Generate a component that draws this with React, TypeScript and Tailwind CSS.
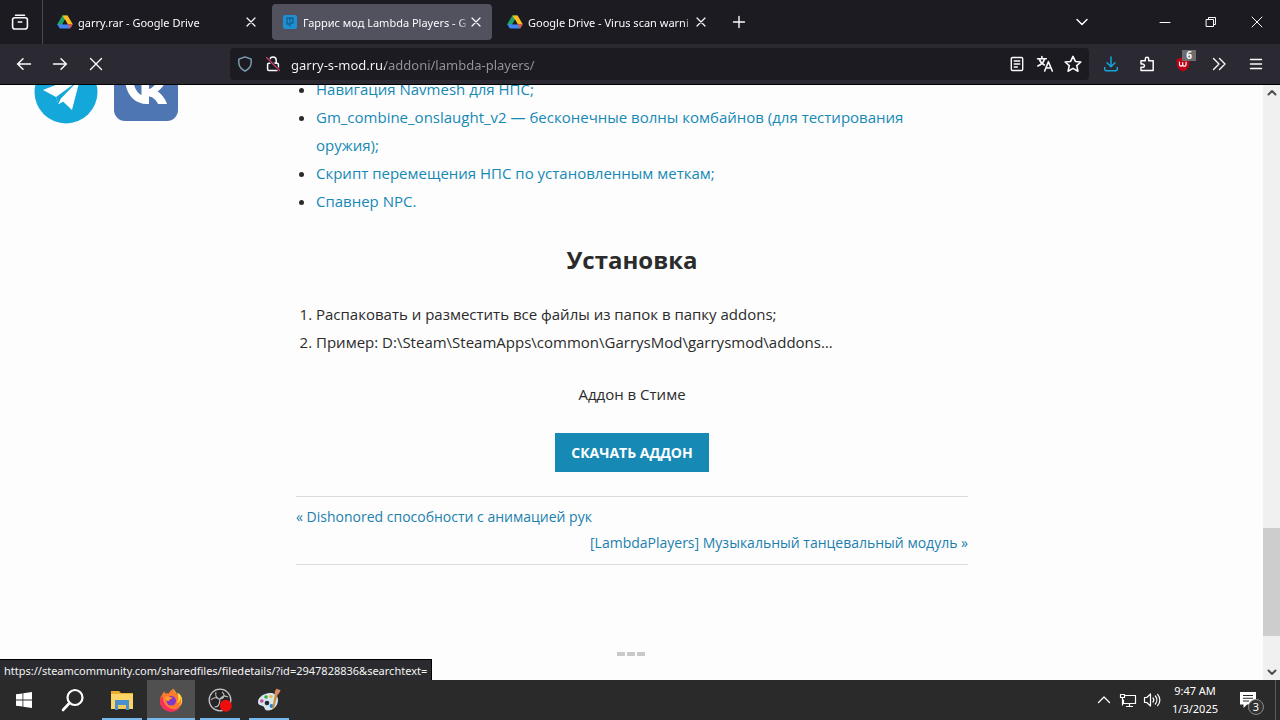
import React from "react";

type IconProps = { children: React.ReactNode; className?: string; box?: string };

function Icon({ children, className = "size-4", box = "0 0 16 16" }: IconProps) {
  return (
    <svg
      viewBox={box}
      className={`shrink-0 ${className}`}
      fill="none"
      stroke="currentColor"
      strokeWidth="1.4"
      strokeLinecap="round"
      strokeLinejoin="round"
      aria-hidden="true"
    >
      {children}
    </svg>
  );
}

const DriveIcon = () => (
  <Icon>
    <g stroke="none">
      <path d="M5.4 1.5h5.2L5.6 10 3 14.3.2 10.2z" fill="#1fa463" />
      <path d="M5.4 1.5h5.2l5.2 8.7h-5.2z" fill="#fcbc1f" />
      <path d="M.2 10.2h15.6L13 14.5H3z" fill="#4285f4" />
      <path d="M10.6 10.2h5.2L13 14.5z" fill="#ea5535" />
      <path d="M8 5.6l2.7 4.6H5.3z" fill="#1c1b22" />
    </g>
  </Icon>
);

const SiteIcon = () => (
  <Icon>
    <rect x="1" y="1" width="14" height="14" rx="2" fill="#1e8fd0" stroke="none" />
    <path d="M5 4h6v5H8v3M5 4v6h2M8 4v3" stroke="#12608f" strokeWidth="1.3" />
  </Icon>
);

const CloseIcon = () => (
  <Icon className="size-3" box="0 0 12 12">
    <path d="M2 2l8 8M10 2l-8 8" strokeWidth="1.2" />
  </Icon>
);

type Tab = { title: string; icon: React.ReactNode; active?: boolean };

const tabs: Tab[] = [
  { title: "garry.rar - Google Drive", icon: <DriveIcon /> },
  { title: "Гаррис мод Lambda Players - G", icon: <SiteIcon />, active: true },
  { title: "Google Drive - Virus scan warni", icon: <DriveIcon /> },
];

function TabBar() {
  return (
    <header className="flex h-11 items-center bg-[#1c1b22]">
      <button aria-label="Recent browsing" className="flex h-full w-[43px] items-center justify-center border-r border-[#4a4952] pr-[2px]">
        <Icon className="size-5" box="0 0 20 20">
          <path d="M5.5 3.2h9M4.5 5.8h11a1.9 1.9 0 0 1 1.9 1.9v7a2.3 2.3 0 0 1-2.3 2.3H4.9a2.3 2.3 0 0 1-2.3-2.3v-7a1.9 1.9 0 0 1 1.9-1.9zM8.3 10h3.4" strokeWidth="1.6" />
        </Icon>
      </button>
      <nav className="ml-1 flex gap-[5px]" aria-label="Tabs">
        {tabs.map((tab) => (
          <div
            key={tab.title}
            className={`flex h-9 w-[220px] items-center gap-[5px] rounded px-[10px] ${tab.active ? "bg-[#52515e]" : ""}`}
          >
            {tab.icon}
            <button className="min-w-0 flex-1 overflow-hidden mask-r-from-[94%] pt-px text-left text-[11px] leading-4 whitespace-nowrap">
              {tab.title}
            </button>
            <button aria-label="Close tab" className="-ml-1">
              <CloseIcon />
            </button>
          </div>
        ))}
      </nav>
      <button aria-label="New tab" className="ml-3">
        <Icon className="size-5" box="0 0 20 20">
          <path d="M10 4.5v11M4.5 10h11" />
        </Icon>
      </button>
      <div className="ml-auto flex">
        <button aria-label="List all tabs" className="mr-11 flex w-8 items-center justify-center">
          <Icon>
            <path d="M3 5.5l5 5 5-5" strokeWidth="1.5" />
          </Icon>
        </button>
        <button aria-label="Minimize" className="flex h-11 w-[46px] items-center justify-center">
          <Icon className="size-3" box="0 0 12 12">
            <path d="M1 6.5h10" strokeWidth="1" />
          </Icon>
        </button>
        <button aria-label="Restore" className="flex h-11 w-[46px] items-center justify-center">
          <Icon className="size-3" box="0 0 12 12">
            <path d="M1.5 3.5h7v7h-7zM3.5 3.5v-2h7v7h-2" strokeWidth="1" />
          </Icon>
        </button>
        <button aria-label="Close" className="flex h-11 w-[46px] items-center justify-center">
          <Icon className="size-3" box="0 0 12 12">
            <path d="M1 1l10 10M11 1L1 11" strokeWidth="1" />
          </Icon>
        </button>
      </div>
    </header>
  );
}

function ToolButton({ label, className = "w-9", children }: { label: string; className?: string; children: React.ReactNode }) {
  return (
    <button type="button" aria-label={label} className={`relative flex h-8 shrink-0 items-center justify-center ${className}`}>
      {children}
    </button>
  );
}

function Toolbar() {
  return (
    <div className="flex h-[41px] items-center border-b border-black bg-[#2b2a33] px-[6px]">
      <ToolButton label="Back">
        <Icon>
          <path d="M14.5 8h-13M7 2.8L1.7 8 7 13.2" strokeWidth="1.5" />
        </Icon>
      </ToolButton>
      <ToolButton label="Forward">
        <Icon>
          <path d="M1.5 8h13M9 2.8L14.3 8 9 13.2" strokeWidth="1.5" />
        </Icon>
      </ToolButton>
      <ToolButton label="Stop">
        <Icon>
          <path d="M2.5 2.5l11 11M13.5 2.5l-11 11" />
        </Icon>
      </ToolButton>
      <form className="ml-[116px] flex h-8 min-w-0 flex-1 items-center rounded bg-[#1c1b22] pr-[2px]">
        <ToolButton label="Tracking protection" className="w-[30px]">
          <Icon className="size-4 text-[#7fa3b4]">
            <path d="M8 .9l6.200 2.300v3.600c0 3.600-2.400 6.300-6.200 8.400C4.200 13.100 1.800 10.400 1.800 6.800V3.200z" />
          </Icon>
        </ToolButton>
        <ToolButton label="Connection is not secure" className="w-[26px]">
          <Icon>
            <path d="M4.800 7V4.300a3.200 3.200 0 0 1 6.400 0V7M3.800 7.300h8.400a1.200 1.200 0 0 1 1.200 1.200v4.800a1.200 1.200 0 0 1-1.200 1.200H3.800a1.200 1.200 0 0 1-1.200-1.200V8.500a1.200 1.200 0 0 1 1.200-1.200z" strokeWidth="1.5" />
            <path d="M1.5 1.5l13 13" stroke="#1c1b22" strokeWidth="3" />
            <path d="M1.5 1.5l13 13" stroke="#c8406a" strokeWidth="1.3" />
          </Icon>
        </ToolButton>
        <input
          aria-label="Address"
          defaultValue="garry-s-mod.ru/addoni/lambda-players/"
          className="ml-[5px] min-w-0 flex-1 bg-[linear-gradient(to_right,#fbfbfe_94px,#95949c_94px)] bg-clip-text pt-[2px] font-['Noto_Sans',sans-serif] text-[13px] leading-5 text-transparent outline-none"
        />
        <ToolButton label="Reader view" className="w-7">
          <Icon>
            <path d="M3.5 1.5h9a1.2 1.2 0 0 1 1.2 1.2v10.600a1.200 1.200 0 0 1-1.200 1.200h-9a1.200 1.200 0 0 1-1.200-1.200V2.700a1.200 1.200 0 0 1 1.200-1.200zM5.200 5h5.600M5.200 8h5.600M5.200 11h3.200" />
          </Icon>
        </ToolButton>
        <ToolButton label="Translate" className="w-7">
          <Icon className="size-[18px]" box="0 0 18 18">
            <path d="M1.500 3.800h8.800M5.900 1.600v2.200M8.600 3.800c-.8 3-3.200 5.800-6.800 7.200M3.400 4.200c.8 2.600 2.600 4.600 5 5.800M8.700 16l3.700-9.300L16.300 16M10 13h5" strokeWidth="1.600" />
          </Icon>
        </ToolButton>
        <ToolButton label="Bookmark" className="w-7">
          <Icon className="size-[18px]">
            <path d="M8 1.200l2.100 4.500 4.900.5-3.700 3.300 1.100 4.900L8 11.900l-4.400 2.500 1.100-4.900L1 6.200l4.900-.5z" />
          </Icon>
        </ToolButton>
      </form>
      <div className="ml-1 flex">
        <ToolButton label="Downloads">
          <Icon className="size-4 text-[#14a5dc]">
            <path d="M8 1v9.500M4 6.800l4 4 4-4M1.700 11.500v1.700a1.500 1.500 0 0 0 1.500 1.500h9.600a1.500 1.500 0 0 0 1.500-1.500v-1.700" strokeWidth="1.500" />
          </Icon>
        </ToolButton>
        <ToolButton label="Extensions">
          <Icon>
            <path d="M2 7.200V4.800h4.300V3a1.700 1.700 0 0 1 3.400 0v1.800h4.500v9.700H2v-3.200h1.800a1.600 1.600 0 0 0 1.600-2 2 2 0 0 0-1.800-1.200H2z" strokeWidth="1.500" />
          </Icon>
        </ToolButton>
        <ToolButton label="uBlock Origin">
          <Icon>
            <path d="M8 1l6.300 2.200v4.500C14.300 11.500 11.500 14 8 15.500 4.500 14 1.700 11.500 1.700 7.700V3.200z" fill="#c00014" stroke="none" />
            <path d="M4.500 6v2.600a1.500 1.500 0 0 0 3.200 0V6.500M7.700 8.600a1.500 1.500 0 0 0 3.400 0V6" strokeWidth="1.200" />
          </Icon>
          <span className="absolute top-[2px] right-[5px] flex h-[11px] w-[14px] items-center justify-center bg-[#6d6d6d] text-[10px] font-bold">6</span>
        </ToolButton>
        <ToolButton label="More tools">
          <Icon>
            <path d="M2.500 2.500L8 8l-5.500 5.500M8.500 2.500L14 8l-5.500 5.500" />
          </Icon>
        </ToolButton>
        <ToolButton label="Menu" className="w-[37px]">
          <Icon>
            <path d="M2.500 3.500h11M2.500 8h11M2.500 12.500h11" />
          </Icon>
        </ToolButton>
      </div>
    </div>
  );
}

const related = [
  "Навигация Navmesh для НПС;",
  "Gm_combine_onslaught_v2 — бесконечные волны комбайнов (для тестирования оружия);",
  "Скрипт перемещения НПС по установленным меткам;",
  "Спавнер NPC.",
];

function Page() {
  return (
    <div className="relative flex min-h-0 flex-1 overflow-hidden bg-[#fdfdfd] font-['Open_Sans',sans-serif] text-[15px] text-[#2b2b2b]">
      <aside className="-mt-[25px] flex w-[296px] shrink-0 items-start gap-4 pl-[34px]">
        <a href="#telegram" aria-label="Telegram">
          <svg viewBox="0 0 64 64" className="size-16">
            <circle cx="32" cy="32" r="31.500" fill="#14a8da" />
            <path d="M9 30L47 15 38 50 29 41.500 24.500 44 22 37z" fill="#fff" />
            <path d="M22 37L44 21 27 38.500 24.500 44z" fill="#14a8da" />
            <path d="M27 39L44 21 29 41.500 24.500 44z" fill="#fff" />
          </svg>
        </a>
        <a href="#vk" aria-label="VK">
          <svg viewBox="0 0 64 64" className="size-16">
            <rect y="-2" width="64" height="63" rx="11" fill="#4d76b2" />
            <path d="M11 20h8c1 8 5 14 8.500 15V20H35v9c4-1 7-5 9-9h8c-1.500 5-5 9-8.500 11.500C47 33.500 51 38 53 44h-9c-2-4-5-7-9-7.500V44h-2C20 44 12 34 11 20z" fill="#fff" />
          </svg>
        </a>
      </aside>
      <article className="-mt-[10px] w-[672px] min-w-0 leading-7">
        <ul className="list-disc pl-5 text-[#1689b5] marker:text-[#2b2b2b]">
          {related.map((item) => (
            <li key={item}>
              <a href="#related">{item}</a>
            </li>
          ))}
        </ul>
        <h2 className="mt-[27px] mb-[22px] text-center text-2xl leading-9 font-bold">Установка</h2>
        <ol className="list-decimal pl-5">
          <li>Распаковать и разместить все файлы из папок в папку addons;</li>
          <li>Пример: D:\Steam\SteamApps\common\GarrysMod\garrysmod\addons…</li>
        </ol>
        <p className="mt-6 text-center">Аддон в Стиме</p>
        <div className="mt-[25px] mb-6 flex justify-center">
          <a href="#download" className="bg-[#1689b5] px-4 py-[6px] text-sm leading-[27px] font-bold text-white">
            СКАЧАТЬ АДДОН
          </a>
        </div>
        <nav aria-label="Posts" className="flex flex-col border-y border-[#dcdcdc] pt-[7px] pb-2 text-sm leading-[26px] text-[#1b7fae]">
          <a href="#previous">« Dishonored способности с анимацией рук</a>
          <a href="#next" className="self-end">
            [LambdaPlayers] Музыкальный танцевальный модуль »
          </a>
        </nav>
        <div className="mt-[87px] flex justify-center gap-[2px] pr-[2px]">
          <span className="h-1 w-2 bg-[#c9c9c9]" />
          <span className="h-1 w-2 bg-[#c9c9c9]" />
          <span className="h-1 w-2 bg-[#c9c9c9]" />
        </div>
      </article>
      <div className="ml-auto flex w-[17px] shrink-0 flex-col items-center justify-between bg-[#f0f0f0] py-[2px] text-[#505050]">
        <Icon className="size-3" box="0 0 12 12">
          <path d="M2.500 7.500L6 4l3.500 3.500" strokeWidth="2" />
        </Icon>
        <div className="mt-auto mb-[30px] h-[108px] w-full bg-[#cdcdcd]" />
        <Icon className="size-3" box="0 0 12 12">
          <path d="M2.500 4.500L6 8l3.500-3.500" strokeWidth="2" />
        </Icon>
      </div>
      <div className="absolute bottom-0 left-0 h-[21px] border-t border-r border-black bg-[#2b2a2e] px-1 pt-px font-['Noto_Sans',sans-serif] text-[11px] leading-5 text-[#f4f4f4]">
        https://steamcommunity.com/sharedfiles/filedetails/?id=2947828836&amp;searchtext=
      </div>
    </div>
  );
}

function Task({ label, running, active, children }: { label: string; running?: boolean; active?: boolean; children: React.ReactNode }) {
  return (
    <button aria-label={label} className={`relative flex h-10 w-12 items-center justify-center ${active ? "bg-[#505050]" : ""}`}>
      {children}
      {running && <span className={`absolute bottom-0 h-[2px] bg-[#76b9ed] ${active ? "inset-x-0" : "inset-x-1"}`} />}
    </button>
  );
}

function Taskbar() {
  return (
    <footer className="flex h-10 items-center bg-[#2a2a2a] text-white">
      <div className="flex gap-px">
        <Task label="Start">
          <svg viewBox="0 0 16 16" className="size-4" fill="#fff">
            <path d="M0 2.300l6.500-.9v6.200H0zM7.300 1.300L16 0v7.600H7.300zM0 8.400h6.500v6.200L0 13.700zM7.300 8.400H16V16l-8.700-1.300z" />
          </svg>
        </Task>
        <Task label="Search">
          <Icon className="size-6" box="0 0 24 24">
            <circle cx="14" cy="9.500" r="7.500" strokeWidth="2.200" />
            <path d="M8.500 15L2 22" strokeWidth="2.600" />
          </Icon>
        </Task>
        <Task label="File Explorer" running>
          <svg viewBox="0 0 24 22" className="h-[22px] w-6">
            <path d="M1 2h8l2 2h12v16H1z" fill="#e9ad2b" />
            <path d="M1 5h22v15H1z" fill="#fbd667" />
            <path d="M5 11h14v10h-3v-5H8v5H5z" fill="#4a90cf" />
            <path d="M8 16h8v4H8z" fill="#f0cb5c" />
          </svg>
        </Task>
        <Task label="Firefox" running active>
          <svg viewBox="0 0 24 24" className="size-6">
            <path d="M3.200 6.500C4 5 5 3.800 5.600 3.200c0 1 .4 2 .9 2.600 1-.5 2.300-.6 3.300-.4C11 3 12.500 1.500 14.700.7c-.3 2 .6 3.200 2.300 4.600.8.7 1.300 1.500 1.700 2.300.2-1.100.1-2-.3-3 3 2 4.800 5.300 4.800 9A11.200 10.500 0 0 1 .9 13.500c0-2.800.8-5 2.300-7z" fill="#ff7a2e" />
            <path d="M14.700.7c-.3 2 .6 3.200 2.300 4.600 3 2.700 3 7 .8 9.700 3-.5 4-3 3.400-5.700.5 1 .9 2.200.9 3.800 0 2-.8 4-2.200 5.500 2-1.300 3.300-3.200 3.300-6 0-3.700-1.800-6-4.800-8 .4 1 .5 1.900.3 3C17.900 4.500 15.500 3.500 14.700.7z" fill="#ffd43c" />
            <path d="M.9 13.500A11.200 10.500 0 0 0 21 19.500c-3 2-8 2.500-12-.2C5.500 17 3 12 4 8 2 9.500.9 11 .9 13.500z" fill="#f5315b" />
            <circle cx="12.300" cy="12.800" r="4.800" fill="#8338c8" />
            <path d="M6 9c2-1.300 4-1 5.500.2l2 .3c-.3 1.300-2 1.500-2.700 2-.6.500-.3 1.500-1.600 1.600C7.500 13 6 11.500 6 9z" fill="#ff9a24" />
          </svg>
        </Task>
        <Task label="OBS Studio" running>
          <svg viewBox="0 0 24 24" className="size-6">
            <circle cx="12" cy="12" r="10.800" fill="#242326" stroke="#c8c8c8" strokeWidth="1.300" />
            <path d="M8 4.200c-1 3 .2 6 3.800 7.200M20 9c-3-1.500-6.300-.8-8.200 2.400M6.500 19c3 0 5.300-2.500 5.300-7.600M3 12c2-2.500 5.500-3.200 8.800-.6M14 4c2.500 1.500 3 5-.5 7" fill="none" stroke="#b8b8b8" strokeWidth="1.200" />
            <circle cx="17.800" cy="17.800" r="6" fill="#f00d0d" />
          </svg>
        </Task>
        <Task label="Paint" running>
          <svg viewBox="0 0 24 24" className="size-6">
            <path d="M10 5.500c6-1.500 11 1 11 6.500 0 6-5 10.500-10 10.500-3.500 0-3-2.500-4.500-4S1 18 1 14c0-4 4-7.500 9-8.500z" fill="#d5e6ee" />
            <circle cx="9" cy="9" r="1.800" fill="#43a64a" />
            <circle cx="4.800" cy="13" r="1.800" fill="#d4449a" />
            <circle cx="14" cy="8.500" r="1.600" fill="#f0b72a" />
            <circle cx="10" cy="15" r="2.300" fill="#222b33" />
            <circle cx="14.500" cy="18" r="1.900" fill="#2c7fd0" />
            <path d="M20.800 6l-4 15-1.600-.8L18 5.500z" fill="#c9903f" />
            <path d="M18 6c-.8-2.500.5-4.500 2-5.500.5 1.200 2.500.8 3.500 1.500-.5 2-1.500 4-3.200 4.800z" fill="#d98a62" />
          </svg>
        </Task>
      </div>
      <div className="ml-auto flex items-center">
        <button aria-label="Show hidden icons" className="flex w-6 justify-center">
          <Icon>
            <path d="M2.500 10.500L8 5l5.500 5.500" strokeWidth="1.300" />
          </Icon>
        </button>
        <button aria-label="Network" className="flex w-6 justify-center">
          <Icon className="size-[18px]" box="0 0 18 18">
            <path d="M6.500 4.500h10v8h-12V9M10.500 12.500v3M7.500 15.500h6M1.500 3.500h4v3h-4zM3.500 6.500V14" strokeWidth="1.200" />
          </Icon>
        </button>
        <button aria-label="Volume" className="flex w-6 justify-center">
          <Icon className="size-[18px]" box="0 0 18 18">
            <path d="M1.500 6.500h2.300L7.500 3v12l-3.700-3.500H1.500zM10 7c1 1.200 1 2.800 0 4M12.300 5c2 2.300 2 5.700 0 8M14.600 3.300c3 3.300 3 8.100 0 11.400" strokeWidth="1.200" />
          </Icon>
        </button>
        <time dateTime="2025-01-03T09:47" className="w-[62px] text-center text-[11px] leading-[18px] whitespace-nowrap">
          9:47 AM
          <br />
          1/3/2025
        </time>
        <button aria-label="Notifications, 3 new" className="relative ml-1 flex h-10 w-10 items-center justify-center">
          <svg viewBox="0 0 18 18" className="mr-1 size-[18px]">
            <path d="M1 1h16v12.500H8L4.500 17v-3.500H1z" fill="#fff" />
            <path d="M4 4.500h10M4 7.300h10M4 10h6" stroke="#2a2a2a" strokeWidth="1.100" />
          </svg>
          <span className="absolute right-[6px] bottom-[5px] flex size-4 items-center justify-center rounded-full border border-[#8a8a8a] bg-[#333] text-[11px]">3</span>
        </button>
        <span className="mr-1 ml-[5px] h-10 w-px bg-[#5a5a5a]" />
      </div>
    </footer>
  );
}

export default function App() {
  return (
    <div className="flex h-screen flex-col overflow-hidden font-['Noto_Sans',sans-serif] text-[#fbfbfe]">
      <TabBar />
      <Toolbar />
      <Page />
      <Taskbar />
    </div>
  );
}
